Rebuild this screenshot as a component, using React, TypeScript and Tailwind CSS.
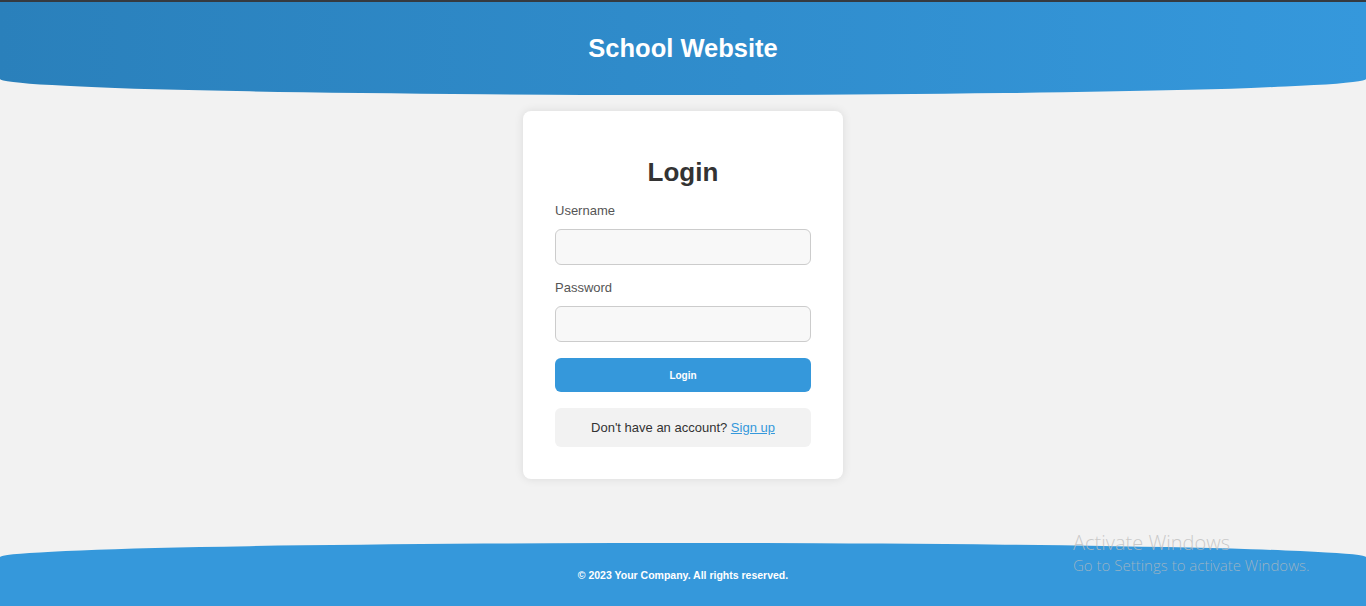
import React from "react";

export default function App() {
  return (
    <div
      className="relative flex h-screen flex-col overflow-hidden bg-[#f2f2f2]"
      style={{ fontFamily: '"Liberation Sans", Arial, sans-serif' }}
    >
      <header className="flex h-[95px] shrink-0 items-center justify-center rounded-bl-[50%_16px] rounded-br-[50%_16px] border-t-2 border-[#353a40] bg-linear-to-r from-[#2a80bb] to-[#3598dc] pb-[1px]">
        <h1 className="text-[25.5px] font-bold text-white">School Website</h1>
      </header>

      <main className="flex flex-1 justify-center pt-4">
        <div className="h-fit w-[320px] rounded-lg bg-white px-8 pb-8 pt-[45px] shadow-[0_0_10px_rgba(0,0,0,0.1)]">
          <h2 className="mb-[15px] text-center text-[26px] font-bold leading-[32px] text-[#333]">Login</h2>
          <label className="mb-[10px] block text-[13px] leading-[16px] text-[#555]">Username</label>
          <input
            type="text"
            className="mb-[15px] block h-[36px] w-full rounded-[6px] border border-[#ccc] bg-[#f8f8f8] px-2 outline-none"
          />
          <label className="mb-[10px] block text-[13px] leading-[16px] text-[#555]">Password</label>
          <input
            type="password"
            className="mb-[16px] block h-[36px] w-full rounded-[6px] border border-[#ccc] bg-[#f8f8f8] px-2 outline-none"
          />
          <button className="block h-[34px] w-full rounded-[6px] bg-[#3598db] text-[10px] font-bold text-white">
            Login
          </button>
          <div className="mt-[16px] flex h-[39px] items-center justify-center rounded-[6px] bg-[#f2f2f2] text-[13px] text-[#333]">
            <span>
              Don't have an account?{" "}
              <a href="#" className="text-[#3598db] underline">
                Sign up
              </a>
            </span>
          </div>
        </div>
      </main>

      <footer className="flex h-[63px] shrink-0 items-center justify-center rounded-tl-[50%_14px] rounded-tr-[50%_14px] bg-[#3598db] pt-[3px]">
        <p className="text-[10.5px] font-bold text-white">© 2023 Your Company. All rights reserved.</p>
      </footer>

      <div
        className="pointer-events-none absolute left-[1073px] top-[530px] text-[rgba(188,188,188,0.76)]"
        style={{ fontFamily: '"Open Sans", "Noto Sans", sans-serif' }}
      >
        <div className="text-[20px] font-light leading-[25px]">Activate Windows</div>
        <div className="text-[15px] font-light leading-[20px]">Go to Settings to activate Windows.</div>
      </div>
    </div>
  );
}
